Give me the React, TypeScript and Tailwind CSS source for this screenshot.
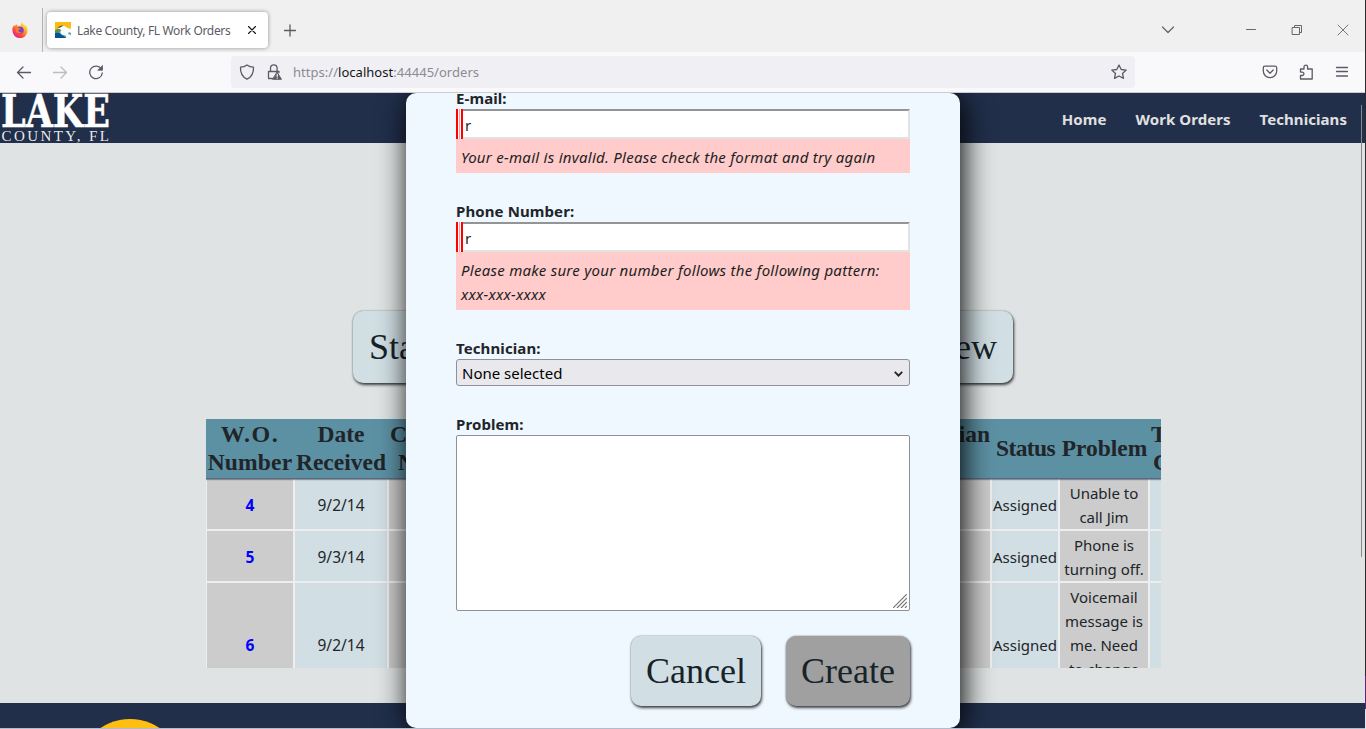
import type { ReactNode } from 'react';

function Icon({ w = 16, h = 16, className = '', children }: { w?: number; h?: number; className?: string; children: ReactNode }) {
  return (
    <svg
      width={w}
      height={h}
      viewBox={`0 0 ${w} ${h}`}
      fill="none"
      stroke="currentColor"
      strokeWidth="1.3"
      strokeLinecap="round"
      strokeLinejoin="round"
      className={`shrink-0 ${className}`}
    >
      {children}
    </svg>
  );
}

function FirefoxIcon() {
  return (
    <svg width="16" height="16" viewBox="0 0 16 16" className="ml-3 shrink-0">
      <defs>
        <linearGradient id="fx" x1="0.85" y1="0.1" x2="0.2" y2="0.9">
          <stop offset="0" stopColor="#fff04a" />
          <stop offset="0.4" stopColor="#ff9a1f" />
          <stop offset="0.7" stopColor="#ff4a3d" />
          <stop offset="1" stopColor="#e6208a" />
        </linearGradient>
      </defs>
      <path d="M10.2 0.2c.5 1.800 1.700 2.300 3 3.800l.3-1c1.200 1.300 2.200 3.400 2.100 5.600A7.600 7.600 0 0 1 .4 8.600C.3 6.300 1 4.500 2.300 3.100l.4 1.300C3.200 3.400 4 2.600 4.700 2.200l.6 1.700c1.600-.2 2.400 0 3.300.2C8.700 2.500 9.200 1.100 10.200.2z" fill="url(#fx)" />
      <circle cx="8.200" cy="8.200" r="3.500" fill="#7a3fd6" />
      <path d="M2.900 5.200c1.600-.6 3.200-.1 4 .9l1.600.3c-.2 1-1.600 1-2.100 1.800-.2 1.600 1.600 2.600 3.600 1.700-1.500 2.200-5 1.800-6.200-.3z" fill="#ff7a2a" />
    </svg>
  );
}

function Favicon() {
  return (
    <svg width="16" height="16" viewBox="0 0 16 16" className="shrink-0">
      <path d="M0 0h16v16H0z" fill="#fdbb13" />
      <path d="M0 9l8-1 8-1v9H0z" fill="#4fa8b8" />
      <path d="M0 11c3-1 5 0 7 2l4 3H0z" fill="#07518c" />
      <path d="M0 8l5-2 1 3-6 2z" fill="#5e8f52" />
      <path d="M5.500 5.500C7 3.500 9.500 3 11 5c1.500 1 3 1.500 5 2v4l-2-1-1 2 3 1v3h-5c1-2-1-3-3-3-2-.5-3-2-2.500-4 1-.5 1-1 .5-1.500L2 6.300z" fill="#f7fbfc" />
      <path d="M2 6.500C4 4.500 6 3.200 8.500 3.600L6 5z" fill="#3d4b3a" />
    </svg>
  );
}

function BrowserChrome() {
  return (
    <div className="font-['Noto_Sans','Open_Sans',sans-serif]">
      <div className="flex h-[52px] bg-[#f0f0f0]">
        <div className="flex w-[42px] items-center pt-2">
          <FirefoxIcon />
        </div>
        <div className="mt-2 w-px bg-[#b2b2b4]" />
        <div className="mt-3 ml-1 flex h-9 w-[221px] items-center rounded bg-white pl-2 shadow-[0_0_4px_rgba(0,0,0,0.4)]">
          <Favicon />
          <span className="ml-1.5 w-[162px] pt-px text-[12px] tracking-[-0.34px] whitespace-nowrap text-[#5c5c66]">Lake County, FL Work Orders</span>
          <Icon className="ml-[5px] text-[#15141a]">
            <path d="M4.500 4.500l7 7M11.500 4.500l-7 7" strokeWidth="1.100" />
          </Icon>
        </div>
        <Icon className="mt-[22px] ml-[14px] text-[#5b5b66]">
          <path d="M2.500 8.500h11M8 3v11" />
        </Icon>
        <div className="flex-1" />
        <div className="flex items-start pt-[22px] text-[#66666e]">
          <Icon className="mr-[67px]">
            <path d="M2.500 5l5.500 5.500L13.500 5" />
          </Icon>
          <Icon className="mr-[30px]">
            <path d="M3.500 7.500h9" strokeWidth="1" />
          </Icon>
          <Icon className="mr-[30px]">
            <path d="M3.500 5.500h7v7h-7zM5.500 5.500v-2h7v7h-2" strokeWidth="1" strokeLinejoin="miter" />
          </Icon>
          <Icon className="mr-[14px]">
            <path d="M3 3l10 10M13 3L3 13" strokeWidth="0.9" />
          </Icon>
        </div>
      </div>
      <div className="flex h-10 items-center bg-[#f9f9fb] text-[#5b5b66]">
        <Icon className="ml-4">
          <path d="M14.500 8.500h-13M7 3L1.500 8.500 7 14" />
        </Icon>
        <Icon className="ml-5 text-[#bcbcc2]">
          <path d="M1.500 8.500h13M9 3l5.500 5.500L9 14" />
        </Icon>
        <Icon className="ml-5">
          <path d="M13.500 5.200A6.300 6.300 0 1 0 14.300 9" />
          <path d="M14.500 1.800v4.400h-4.400z" fill="currentColor" strokeWidth="0.8" />
        </Icon>
        <div className="ml-[127px] flex h-8 w-[904px] items-center rounded bg-[#f0f0f4]">
          <Icon className="ml-2">
            <path d="M8 .9c2 1.600 4 2.200 6.500 2.300.3 5.500-1.500 9.500-6.500 12C3 12.700 1.200 8.700 1.500 3.200 4 3.100 6 2.500 8 .9z" />
          </Icon>
          <Icon className="ml-[11px]">
            <path d="M4.500 7V4.200a3.300 3.300 0 0 1 6.600 0V7M6.500 14.500H2.500V7.500h10.500v1" />
            <path d="M11.200 8.300l4.200 7H7z" fill="currentColor" strokeWidth="1" />
            <path d="M11.200 10.300v2.300M11.200 14v.2" stroke="#fff" strokeWidth="1.100" />
          </Icon>
          <span className="ml-[11px] pt-0.5 text-[13px] tracking-[0.030px] text-[#8b8b93]">
            https://<span className="text-[#15141a]">localhost</span>:44445/orders
          </span>
          <div className="flex-1" />
          <Icon className="mr-2">
            <path d="M8 1l2.200 4.500 5 .6-3.700 3.400 1 4.900L8 12l-4.500 2.400 1-4.900L.8 6.100l5-.6z" />
          </Icon>
        </div>
        <Icon className="ml-[127px]">
          <path d="M2.800 2.200h10.400a1.600 1.600 0 0 1 1.500 1.600V7a6.700 6.700 0 0 1-13.400 0V3.800a1.600 1.600 0 0 1 1.500-1.600zM4.800 6L8 9.200 11.200 6" />
        </Icon>
        <Icon className="ml-5">
          <path d="M2.500 5H6V3a1.600 1.600 0 0 1 3.600 0v2h4.600v10H2.500v-3.500h1.700a1.700 1.700 0 0 0 0-3.400H2.500z" />
        </Icon>
        <Icon className="ml-5">
          <path d="M2.500 3.500h11M2.500 7.500h11M2.500 12h11" />
        </Icon>
      </div>
      <div className="h-px bg-[#cccccf]" />
    </div>
  );
}

function Logo() {
  return (
    <svg width="112" height="50" viewBox="0 0 112 50" fill="#fff">
      <text x="1" y="34" fontFamily="DejaVu Serif, serif" fontSize="44" fontWeight="700" textLength="109" lengthAdjust="spacingAndGlyphs" stroke="#fff" strokeWidth="0.500">
        LAKE
      </text>
      <text x="1.500" y="48" fontFamily="Liberation Serif, serif" fontSize="15" textLength="107.500" lengthAdjust="spacing" fillOpacity="0.92">
        COUNTY, FL
      </text>
    </svg>
  );
}

const rows = [
  { id: '4', date: '9/2/14', height: 'h-[50px]', problem: ['Unable to', 'call Jim'] },
  { id: '5', date: '9/3/14', height: 'h-[50px]', problem: ['Phone is', 'turning off.'] },
  { id: '6', date: '9/2/14', height: 'h-[122px]', problem: ['Voicemail', 'message is', 'me. Need', 'to change'] },
];

const columns = 'grid grid-cols-[86px_92px_601px_66px_88px_88px] gap-x-0.5 pl-px';

function HeaderCell({ lines, className = 'items-center' }: { lines: string[]; className?: string }) {
  return (
    <div className={`flex flex-col justify-center whitespace-nowrap ${className}`}>
      {lines.map((line) => (
        <span key={line}>{line}</span>
      ))}
    </div>
  );
}

function OrdersTable() {
  return (
    <div className="mt-[36px] ml-[206px] h-[249px] w-[955px] overflow-hidden bg-[#eee]">
      <div className={`${columns} relative h-[60px] border-b border-[#5b6a80] bg-[#5c91a4] pb-0.5 font-['Liberation_Serif',serif] text-[23.500px] leading-[28px] font-bold text-[#212529] shadow-[0_1px_1px_rgba(60,70,90,0.5)]`}>
        <div className="flex flex-col items-center justify-center">
          <span className="text-[24px] tracking-[1.500px]">W.O.</span>
          <span className="tracking-[0.200px]">Number</span>
        </div>
        <HeaderCell lines={['Date', 'Received']} />
        <div className="flex justify-between">
          <div className="flex flex-col justify-center pl-px">
            <span>C</span>
            <span className="pl-2">N</span>
          </div>
          <HeaderCell lines={['ian', '\u00a0']} className="items-end" />
        </div>
        <HeaderCell lines={['Status']} className="items-center pl-px tracking-[-0.600px]" />
        <HeaderCell lines={['Problem']} className="items-center pl-px" />
        <div className="flex flex-col justify-center pl-px">
          <span>T</span>
          <span className="pl-0.5">C</span>
        </div>
      </div>
      <div className="flex flex-col gap-0.5 text-[15px] leading-6 text-[#212529]">
        {rows.map((row) => (
          <div key={row.id} className={`${columns} ${row.height}`}>
            <div className="flex items-center justify-center bg-[#ccc] pt-px text-[15.500px] font-bold text-[#0000ff]">{row.id}</div>
            <div className="flex items-center justify-center bg-[#d1dfe4] pt-px text-[15.500px]">{row.date}</div>
            <div className="bg-[#ccc]" />
            <div className="flex items-center justify-center bg-[#d1dfe4] pt-0.5">Assigned</div>
            <div className="flex flex-col items-center bg-[#ccc] pt-0.5 whitespace-nowrap">
              {row.problem.map((line) => (
                <span key={line}>{line}</span>
              ))}
            </div>
            <div className="bg-[#d1dfe4]" />
          </div>
        ))}
      </div>
    </div>
  );
}

const button =
  "flex items-center rounded-[10px] font-['Liberation_Serif',serif] text-[#172328] shadow-[1px_2px_3px_rgba(0,0,0,0.7),0_0_2px_rgba(0,0,0,0.4)]";

const labelText = 'h-4 text-[15px] leading-[11px] font-bold tracking-[0.100px] text-[#212529]';

function TextField({ label, error, className = '' }: { label: string; error: string[]; className?: string }) {
  return (
    <div className={className}>
      <div className={labelText}>{label}</div>
      <div className="flex h-[30px]">
        <div className="flex w-[7px] justify-center border-x-2 border-[red] bg-white">
          <div className="w-px bg-[#ff9c9c]" />
        </div>
        <div className="flex flex-1 items-center border-2 border-l-0 border-t-[#949494] border-r-[#e3e3e3] border-b-[#e3e3e3] bg-white pt-0.5 pl-0.5 text-[15px] text-[#212529]">
          r
        </div>
      </div>
      <div className="bg-[#ffcbcb] px-[5px] pt-[6px] pb-1 text-[15px] leading-6 tracking-[0.270px] text-[#1c1f22] italic">
        {error.map((line) => (
          <div key={line} className="whitespace-nowrap">{line}</div>
        ))}
      </div>
    </div>
  );
}

function OrderDialog() {
  return (
    <div className="absolute top-0 left-[406px] h-[635px] w-[554px] rounded-[10px] bg-[#eff7ff] px-[50px] shadow-[3px_3px_30px_#000]">
      <TextField label="E-mail:" error={['Your e-mail is invalid. Please check the format and try again']} />
      <TextField
        className="mt-[33px]"
        label="Phone Number:"
        error={['Please make sure your number follows the following pattern:', 'xxx-xxx-xxxx']}
      />
      <div className={`mt-[33px] ${labelText}`}>Technician:</div>
      <div className="flex h-[27px] items-center justify-between rounded-[3px] border border-[#8f8f9d] bg-[#e9e9ed] pt-0.5 pr-1.5 pl-[5px] text-[15px] text-black">
        <span>None selected</span>
        <svg width="9" height="6" viewBox="0 0 9 6" fill="none" stroke="#222" strokeWidth="1.800">
          <path d="M.8.800l3.700 3.800L8.200.800" />
        </svg>
      </div>
      <div className={`mt-[33px] ${labelText}`}>Problem:</div>
      <div className="flex h-[176px] items-end justify-end rounded-[2px] border border-[#8f8f9d] bg-white p-0.5">
        <svg width="14" height="14" viewBox="0 0 14 14" fill="none" stroke="#777" strokeWidth="1.200">
          <path d="M0 14L14 0M4 14L14 4M8 14l6-6M12 14l2-2" />
        </svg>
      </div>
      <div className="mt-[25px] flex justify-end gap-[25px] text-[36px]">
        <div className={`${button} h-[70px] w-[130px] justify-center bg-[#d1dfe4]`}>Cancel</div>
        <div className={`${button} h-[70px] w-[124px] justify-center bg-[#a0a0a0]`}>Create</div>
      </div>
    </div>
  );
}

export default function App() {
  return (
    <div className="flex h-[729px] w-[1366px] overflow-hidden bg-white">
      <div className="flex w-[1365px] flex-col">
        <BrowserChrome />
        <div className="relative h-[635px] overflow-hidden bg-[#dfe3e3] font-['Noto_Sans','Open_Sans',sans-serif]">
          <div className="flex h-[50px] justify-between bg-[#212f4b]">
            <Logo />
            <nav className="flex items-center gap-[29px] pt-0.5 pr-[18px] text-[15px] font-bold tracking-[0.060px] text-[#e0e0e0]">
              <span>Home</span>
              <span>Work Orders</span>
              <span>Technicians</span>
            </nav>
          </div>
          <div className={`${button} mt-[168px] ml-[353px] h-[72px] w-[660px] justify-between bg-[#d1dfe4] px-4 text-[36px]`}>
            <span>Sta</span>
            <span>ew</span>
          </div>
          <OrdersTable />
          <div className="mt-[35px] h-[25px] overflow-hidden bg-[#212f4b] pt-4 pl-[77px]">
            <div className="size-[106px] rounded-full bg-[#ffbe10]" />
          </div>
          <OrderDialog />
          <div className="absolute top-3 right-[3px] h-[452px] w-px bg-[#85888c]" />
        </div>
        <div className="h-px bg-[#b4bccb]" />
      </div>
      <div className="flex w-px flex-col bg-[#dfe3e8]">
        <div className="h-[676px] bg-[#2b2b2b]" />
        <div className="h-[33px] bg-[#68217a]" />
      </div>
    </div>
  );
}
